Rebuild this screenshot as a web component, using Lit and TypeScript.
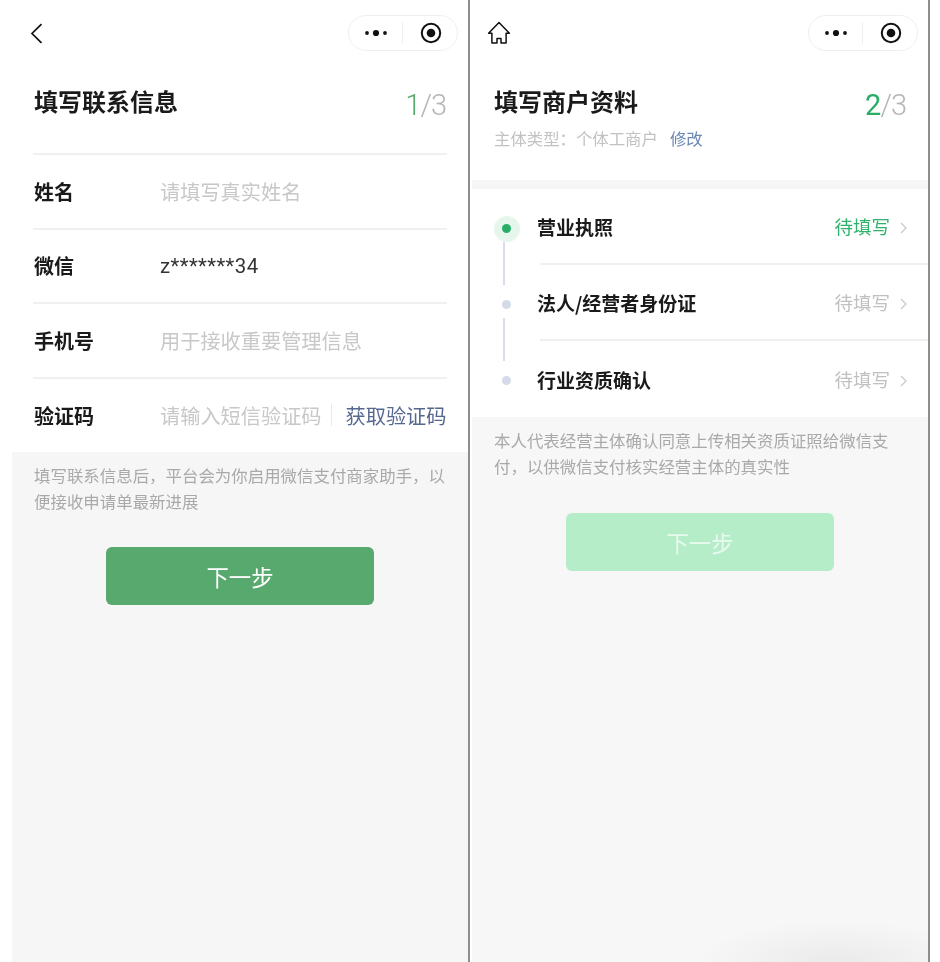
import { LitElement, html, css, svg } from "lit";
import { customElement } from "lit/decorators.js";

const capsule = html`<div class="capsule">
  <svg class="more" width="22" height="8" viewBox="0 0 22 8"><circle cx="2" cy="4" r="1.9"/><circle cx="11" cy="4" r="3.1"/><circle cx="20" cy="4" r="1.9"/></svg>
  <span class="cap-sep"></span>
  <svg class="target" width="22" height="22" viewBox="0 0 22 22"><circle cx="11" cy="11" r="9.2" fill="none" stroke="#111" stroke-width="2"/><circle cx="11" cy="11" r="4.3" fill="#111"/></svg>
</div>`;

const chevron = svg`<path d="M1 1l5 5-5 5" fill="none" stroke="currentColor" stroke-width="1.2"/>`;

@customElement("app-root")
export class AppRoot extends LitElement {
  static styles = css`
    :host { display: block; background: #fff; font-family: "Noto Sans CJK SC", "Noto Sans", sans-serif; }
    .page { display: flex; height: 962px; overflow: hidden; background: #fff; padding-left: 12px; box-sizing: border-box; filter: blur(0.45px); }
    .panel { width: 456px; flex: none; display: flex; flex-direction: column; background: #fff; }
    .rule { width: 2px; flex: none; background: #8e8e8e; }
    .rule.first { margin-right: 2px; }
    .nav { height: 66px; flex: none; display: flex; align-items: center; justify-content: space-between; padding: 0 10px 0 0; box-sizing: border-box; }
    .nav-icon { display: block; }
    .nav-icon.back { margin-left: 18px; }
    .nav-icon.home { margin-left: 15px; }
    .capsule { width: 110px; height: 36.5px; box-sizing: border-box; border: 1px solid #efefef; border-radius: 19px; display: flex; align-items: center; padding-left: 16px; }
    .more { fill: #111; display: block; }
    .cap-sep { width: 1px; height: 22px; background: #f0f0f0; margin: 0 17px 0 15px; }
    .head { padding: 18.5px 22px 0; display: flex; justify-content: space-between; align-items: flex-start; box-sizing: border-box; }
    .head.contact { height: 87px; }
    .head.merchant { height: 114px; }
    .title { font-size: 24px; line-height: 32px; font-weight: 700; color: #1a1a1a; }
    .sub { margin-top: 9.5px; font-size: 16.4px; line-height: 24px; color: #c2c2c2; display: flex; gap: 12px; white-space: nowrap; }
    .sub a { color: #6b88b5; }
    .step { font-family: Roboto, sans-serif; font-weight: 300; font-size: 29px; letter-spacing: -1px; line-height: 32px; color: #b4b4b4; margin-top: 4px; }
    .step b { font-weight: 300; color: #57a96e; }
    .step b.bright { color: #2aae67; font-weight: 400; }
    .form { padding: 0 21px; }
    .row { height: 74.6px; box-sizing: border-box; border-top: 2px solid #f0f0f0; display: flex; align-items: center; font-size: 20.2px; }
    .row:last-child { height: 75px; }
    .label { width: 127px; padding-left: 1px; box-sizing: border-box; font-size: 20px; font-weight: 700; color: #1a1a1a; flex: none; }
    .ph { color: #c8c8c8; white-space: nowrap; }
    .val { color: #333; font-size: 20.4px; letter-spacing: 0.4px; font-family: Roboto, sans-serif; }
    .code-sep { width: 1px; height: 22px; background: #eaeaea; margin: 0 14px 0 9px; flex: none; }
    .link { color: #56688f; white-space: nowrap; }
    .foot { flex: 1; background: #f6f6f6; padding: 10px 22px 0; display: flex; flex-direction: column; }
    .foot.shade { background: radial-gradient(ellipse 140px 42px at 365px 100%, #eaeaea, #f7f7f700), #f7f7f7; padding-top: 9.5px; }
    .note { font-size: 16.45px; line-height: 26px; color: #a9a9a9; }
    .btn { width: 268px; height: 58px; margin: 33px auto 0; border-radius: 6px; display: flex; align-items: center; justify-content: center; font-size: 22.4px; color: #fff; }
    .btn.on { background: #57a96e; }
    .btn.off { background: #b5edc9; color: #e8f9ee; margin-top: 34px; }
    .gap { height: 9px; flex: none; background: #f6f6f6; }
    .steps { height: 228px; flex: none; display: flex; flex-direction: column; }
    .item { height: 76px; flex: none; display: grid; grid-template-columns: 65px 1fr; }
    .track-inner { width: 26px; margin-left: 21.5px; height: 100%; display: flex; flex-direction: column; align-items: center; }
    .spot { height: 26px; width: 26px; margin-top: 26.5px; flex: none; display: flex; align-items: center; justify-content: center; border-radius: 50%; }
    .spot i { display: block; width: 9px; height: 9px; border-radius: 50%; background: #d5dae8; }
    .spot.now { background: #e6f6ec; }
    .spot.now i { background: #2aae67; }
    .stem { width: 1.4px; height: 43px; background: #d8dcec; margin-top: 0.5px; margin-left: -5px; }
    .item-body { display: flex; align-items: center; justify-content: space-between; padding-right: 20px; box-sizing: border-box; border-bottom: 2px solid #f0f0f0; margin-left: 3px; height: 76px; }
    .item:last-child .item-body { border-bottom: none; }
    .item-name { font-size: 19px; font-weight: 700; color: #1a1a1a; margin-left: -3px; white-space: nowrap; }
    .status { display: flex; align-items: center; gap: 10px; font-size: 18.5px; color: #c0c0c0; }
    .status.now { color: #2fb26c; }
    .status svg { color: #c8c8c8; display: block; margin-top: 3px; margin-right: 1px; }
  `;

  private item(name: string, active: boolean, stem: boolean) {
    return html`<div class="item">
      <div class="track-inner">
        <div class="spot ${active ? "now" : ""}"><i></i></div>
        ${stem ? html`<div class="stem"></div>` : ""}
      </div>
      <div class="item-body">
        <span class="item-name">${name}</span>
        <span class="status ${active ? "now" : ""}">待填写<svg width="7" height="12" viewBox="0 0 7 12">${chevron}</svg></span>
      </div>
    </div>`;
  }

  render() {
    return html`<div class="page">
      <section class="panel">
        <div class="nav">
          <svg class="nav-icon back" width="13" height="21" viewBox="0 0 13 21"><path d="M11.5 1.2L2 10.5l9.5 9.3" fill="none" stroke="#111" stroke-width="1.7"/></svg>
          ${capsule}
        </div>
        <div class="head contact">
          <div class="title">填写联系信息</div>
          <div class="step"><b>1</b>/3</div>
        </div>
        <div class="form">
          <div class="row"><span class="label">姓名</span><span class="ph">请填写真实姓名</span></div>
          <div class="row"><span class="label">微信</span><span class="val">z*******34</span></div>
          <div class="row"><span class="label">手机号</span><span class="ph">用于接收重要管理信息</span></div>
          <div class="row"><span class="label">验证码</span><span class="ph">请输入短信验证码</span><span class="code-sep"></span><span class="link">获取验证码</span></div>
        </div>
        <div class="foot">
          <div class="note">填写联系信息后，平台会为你启用微信支付商家助手，以便接收申请单最新进展</div>
          <div class="btn on">下一步</div>
        </div>
      </section>
      <div class="rule first"></div>
      <section class="panel">
        <div class="nav">
          <svg class="nav-icon home" width="24" height="24" viewBox="0 0 24 24"><path d="M12 1.5L1.6 12.2h3.3v9.8h5.1v-4.4h4v4.4h5.1v-9.8h3.3z" fill="none" stroke="#111" stroke-width="1.5" stroke-linejoin="round"/></svg>
          ${capsule}
        </div>
        <div class="head merchant">
          <div>
            <div class="title">填写商户资料</div>
            <div class="sub"><span>主体类型：个体工商户</span><a>修改</a></div>
          </div>
          <div class="step"><b class="bright">2</b>/3</div>
        </div>
        <div class="gap"></div>
        <div class="steps">
          ${this.item("营业执照", true, true)}
          ${this.item("法人/经营者身份证", false, true)}
          ${this.item("行业资质确认", false, false)}
        </div>
        <div class="foot shade">
          <div class="note">本人代表经营主体确认同意上传相关资质证照给微信支付，以供微信支付核实经营主体的真实性</div>
          <div class="btn off">下一步</div>
        </div>
      </section>
      <div class="rule"></div>
    </div>`;
  }
}
